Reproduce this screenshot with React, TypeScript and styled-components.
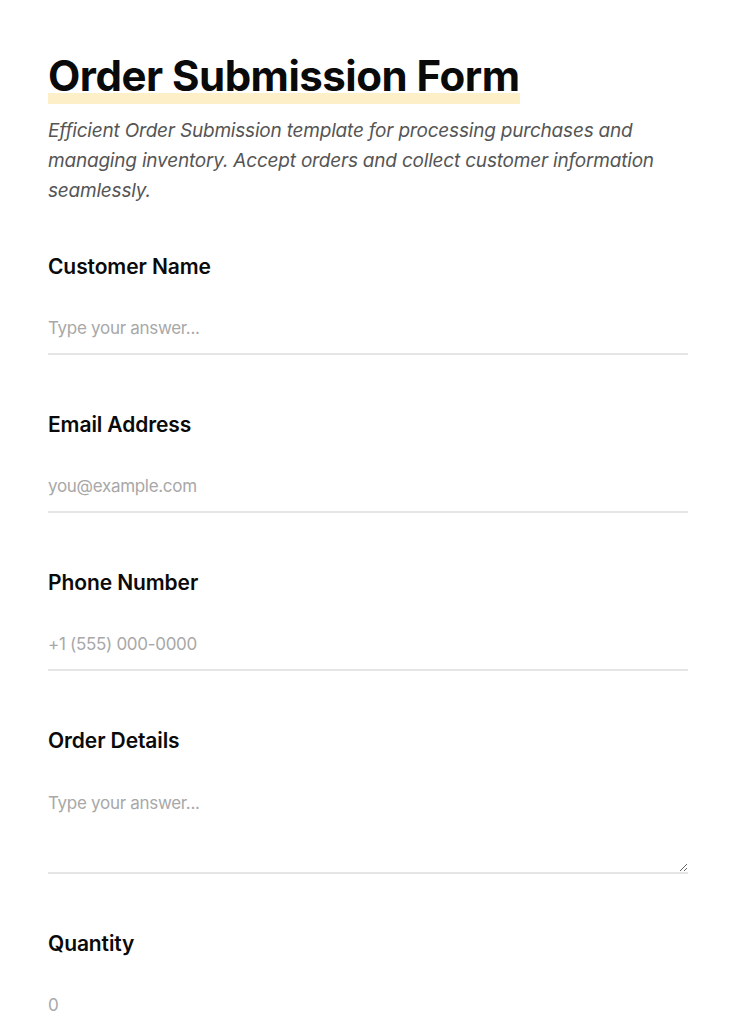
import React from "react";
import styled, { createGlobalStyle } from "styled-components";

const Global = createGlobalStyle`
  html, body { margin: 0; padding: 0; background: #ffffff; }
  body { font-family: "Inter", "Open Sans", sans-serif; color: #111; }
  * { box-sizing: border-box; }
`;

const Page = styled.main`
  width: 736px;
  padding: 48px 48px 0;
`;

const Header = styled.header`
  display: flex;
  flex-direction: column;
  align-items: flex-start;
  gap: 12px;
  margin-bottom: 47px;
`;

const Title = styled.h1`
  margin: 0;
  font-size: 42px;
  line-height: 56px;
  font-weight: 700;
  letter-spacing: -0.5px;
  color: #0a0a0a;
  background: linear-gradient(to bottom, transparent 0, transparent 45px, #fdf0c9 45px, #fdf0c9 57px);
`;

const Description = styled.p`
  margin: 0;
  font-size: 19px;
  line-height: 30px;
  font-style: italic;
  color: #555;
  letter-spacing: -0.2px;
`;

const Fields = styled.div`
  display: flex;
  flex-direction: column;
  gap: 56px;
`;

const Field = styled.label`
  display: flex;
  flex-direction: column;
  gap: 23px;
`;

const Label = styled.span`
  font-size: 21px;
  line-height: 28px;
  font-weight: 600;
  letter-spacing: -0.1px;
  color: #0a0a0a;
`;

const inputBase = `
  width: 100%;
  border: none;
  border-bottom: 2px solid #e5e5e5;
  background: transparent;
  font-family: "Inter", "Open Sans", sans-serif;
  font-size: 17px;
  letter-spacing: -0.3px;
  color: #111;
  outline: none;
  padding: 0;
  &::placeholder { color: #a8a8a8; }
`;

const Input = styled.input`
  ${inputBase}
  height: 51px;
  line-height: 51px;
`;

const TextArea = styled.textarea`
  ${inputBase}
  height: 96px;
  padding-top: 14px;
  line-height: 22px;
  resize: vertical;
`;

export default function App() {
  return (
    <>
      <Global />
      <Page>
        <Header>
          <Title>Order Submission Form</Title>
          <Description>
            Efficient Order Submission template for processing purchases and managing inventory. Accept orders and
            collect customer information seamlessly.
          </Description>
        </Header>
        <Fields>
          <Field>
            <Label>Customer Name</Label>
            <Input type="text" placeholder="Type your answer..." />
          </Field>
          <Field>
            <Label>Email Address</Label>
            <Input type="email" placeholder="you@example.com" />
          </Field>
          <Field>
            <Label>Phone Number</Label>
            <Input type="tel" placeholder="+1 (555) 000-0000" />
          </Field>
          <Field>
            <Label>Order Details</Label>
            <TextArea placeholder="Type your answer..." />
          </Field>
          <Field>
            <Label>Quantity</Label>
            <Input type="number" placeholder="0" />
          </Field>
        </Fields>
      </Page>
    </>
  );
}
